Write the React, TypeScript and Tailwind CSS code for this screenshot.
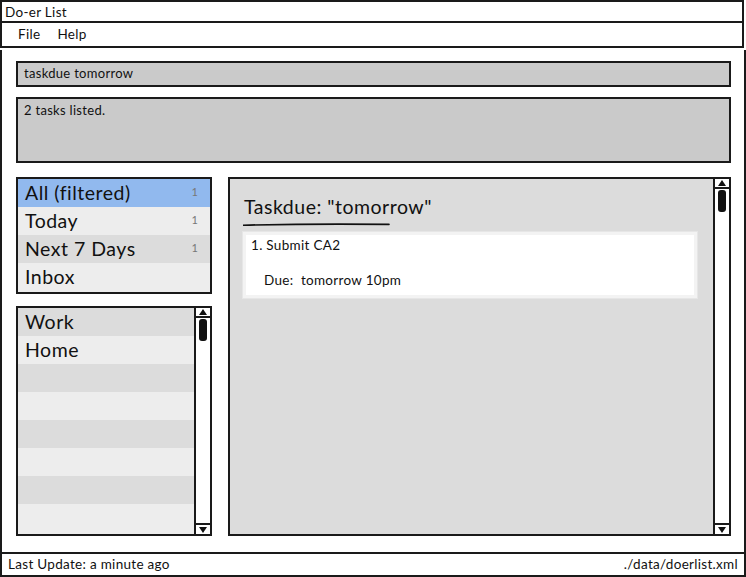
import React from "react";

const smart = [
  { label: "All (filtered)", count: 1, bg: "bg-[#91b9ee]" },
  { label: "Today",          count: 1, bg: "bg-[#ededed]" },
  { label: "Next 7 Days",    count: 1, bg: "bg-[#dcdcdc]" },
  { label: "Inbox",          count: null, bg: "bg-[#ededed]" },
];

const lists = ["Work", "Home", "", "", "", "", "", ""];

function ScrollBar() {
  return (
    <div className="w-[16px] border-l-2 border-[#1a1a1a] bg-white flex flex-col justify-between">
      <div className="flex flex-col items-center">
        <div className="w-full h-[10px] border-b-2 border-[#1a1a1a] flex items-center justify-center">
          <svg width="8" height="6" viewBox="0 0 8 6"><path d="M4 0L8 6H0Z" fill="#111" /></svg>
        </div>
        <div className="w-[8px] h-[22px] rounded-[3px] bg-[#111] mt-[1px]" />
      </div>
      <div className="w-full h-[11px] border-t-2 border-[#1a1a1a] flex items-center justify-center">
        <svg width="8" height="6" viewBox="0 0 8 6"><path d="M0 0H8L4 6Z" fill="#111" /></svg>
      </div>
    </div>
  );
}

export default function App() {
  return (
    <div className="w-[746px] h-[577px] bg-white flex flex-col text-[#111]" style={{ fontFamily: "Lato, 'Noto Sans', sans-serif" }}>
      {/* Title */}
      <div className="h-[23px] border-2 border-[#1a1a1a] mr-[2px] px-[3px] pt-[1px] flex items-center text-[13.5px] tracking-[0.3px]">Do-er List</div>
      {/* Menu */}
      <div className="h-[25px] border-2 border-t-0 border-[#1a1a1a] mr-[2px] pl-[16px] flex items-center gap-[17px] text-[13.5px] tracking-[0.3px]">
        <span>File</span>
        <span>Help</span>
      </div>

      {/* Body */}
      <div className="flex-1 border-x-2 border-[#1a1a1a] mt-[2px] pl-[14px] pr-[13px] pt-[11px] pb-[16px] flex flex-col min-h-0">
        <div className="h-[26px] border-2 border-[#1a1a1a] bg-[#cacaca] px-[6px] flex items-center text-[13px] tracking-[0.3px]">taskdue tomorrow</div>
        <div className="h-[66px] mt-[10px] border-2 border-[#1a1a1a] bg-[#cacaca] px-[6px] pt-[2px] text-[13px] tracking-[0.3px]">2 tasks listed.</div>

        <div className="flex-1 mt-[14px] flex gap-[16px] min-h-0">
          {/* Left column */}
          <div className="w-[196px] flex flex-col gap-[12px]">
            <div className="border-2 border-[#1a1a1a] bg-[#ededed] h-[117px]">
              {smart.map((s) => (
                <div key={s.label} className={`h-[28px] ${s.bg} pl-[7px] pr-[12px] pb-[1px] flex items-center justify-between`}>
                  <span className="text-[19.5px] tracking-[0.5px]">{s.label}</span>
                  {s.count !== null && <span className="text-[11px] text-[#777]">{s.count}</span>}
                </div>
              ))}
            </div>
            <div className="flex-1 border-2 border-[#1a1a1a] bg-[#ededed] flex min-h-0">
              <div className="flex-1 overflow-hidden">
                {lists.map((l, i) => (
                  <div key={i} className={`h-[28px] pl-[7px] pb-[1px] flex items-center text-[19.5px] tracking-[0.5px] ${i % 2 === 0 ? "bg-[#dcdcdc]" : "bg-[#ededed]"}`}>
                    {l}
                  </div>
                ))}
              </div>
              <ScrollBar />
            </div>
          </div>

          {/* Right panel */}
          <div className="flex-1 border-2 border-[#1a1a1a] bg-[#dcdcdc] flex">
            <div className="flex-1 pl-[13px] pr-[16px] pt-[13px]">
              <div className="text-[19.5px] tracking-[0.5px] pl-[1px]">Taskdue: "tomorrow"</div>
              <svg width="150" height="5" viewBox="0 0 150 5" className="block mt-[1px]">
                <path d="M0 3.2 Q70 1.6 146 2.4" stroke="#111" strokeWidth="1.6" fill="none" strokeLinecap="round" />
              </svg>
              <div className="mt-[5px] h-[66px] bg-white border-[3px] border-[#f3f3f3] pl-[5px] text-[13.5px] tracking-[0.3px] outline outline-1 outline-[#e6e6e6]">
                <div>1. Submit CA2</div>
                <div className="mt-[14px] pl-[13px]">Due:&nbsp; tomorrow 10pm</div>
              </div>
            </div>
            <ScrollBar />
          </div>
        </div>
      </div>

      {/* Status */}
      <div className="h-[25px] border-2 border-[#1a1a1a] px-[6px] flex items-center justify-between text-[13.5px] tracking-[0.3px]">
        <span>Last Update: a minute ago</span>
        <span>./data/doerlist.xml</span>
      </div>
    </div>
  );
}
